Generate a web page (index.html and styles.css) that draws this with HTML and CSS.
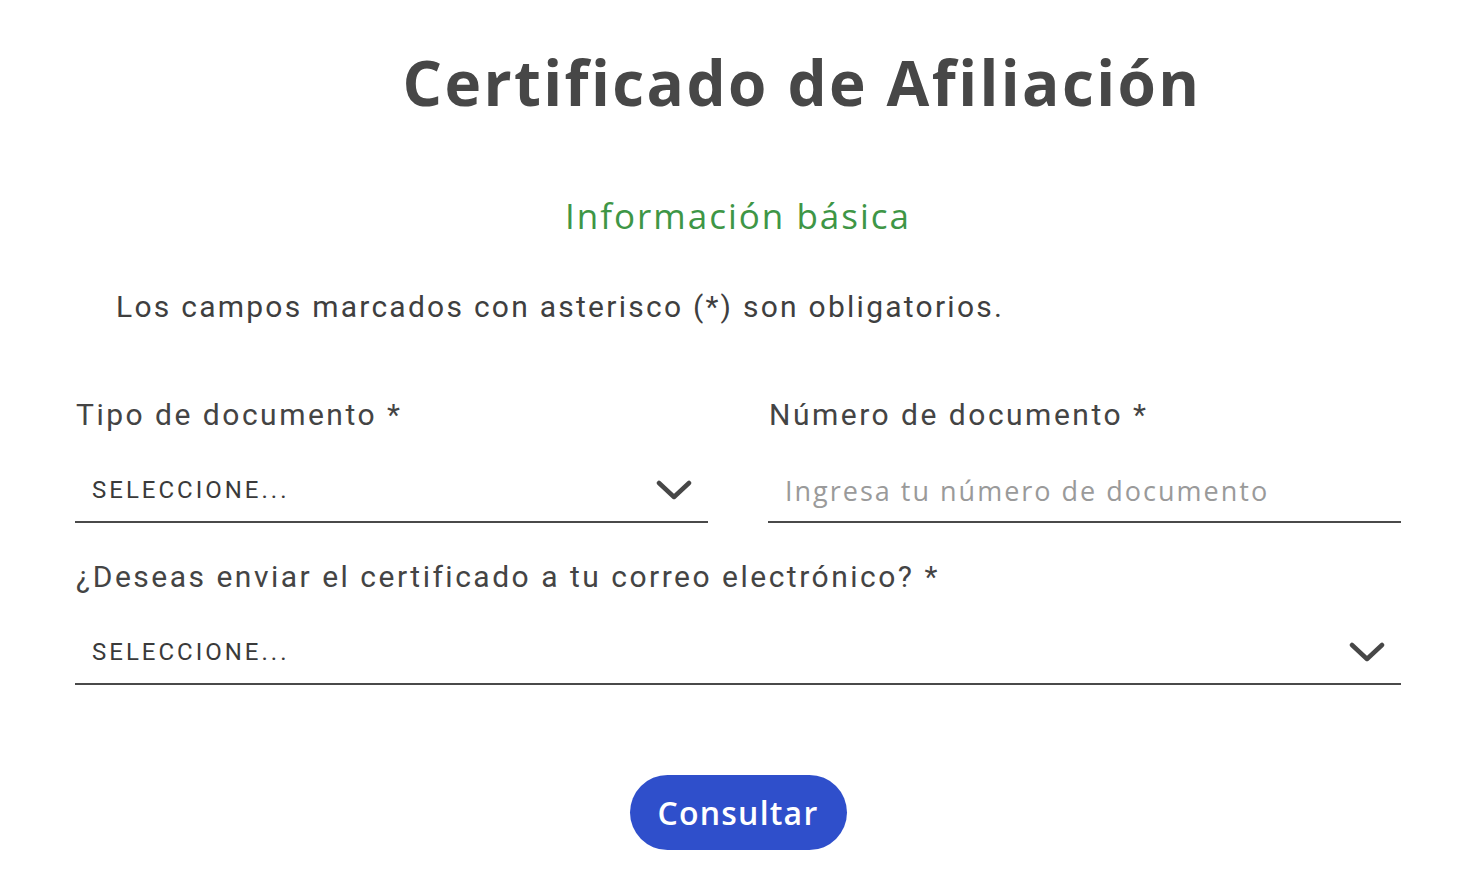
FILE: index.html
```html
<!DOCTYPE html>
<html lang="es">
<head>
<meta charset="utf-8">
<title>Certificado de Afiliación</title>
<link rel="stylesheet" href="styles.css">
</head>
<body>
<main class="page">
  <h1 class="title">Certificado de Afiliación</h1>
  <h2 class="subtitle">Información básica</h2>
  <p class="note">Los campos marcados con asterisco (*) son obligatorios.</p>
  <form class="form">
    <div class="row two">
      <div class="field">
        <label class="label">Tipo de documento *</label>
        <div class="select">
          <span class="select-text">SELECCIONE...</span>
          <svg class="chevron" viewBox="0 0 36 20" width="36" height="20"><path d="M3 3 L18 17 L33 3" fill="none" stroke="#474747" stroke-width="4.5" stroke-linecap="round" stroke-linejoin="round"/></svg>
        </div>
      </div>
      <div class="field">
        <label class="label">Número de documento *</label>
        <div class="input">
          <span class="placeholder">Ingresa tu número de documento</span>
        </div>
      </div>
    </div>
    <div class="row">
      <div class="field">
        <label class="label">¿Deseas enviar el certificado a tu correo electrónico? *</label>
        <div class="select">
          <span class="select-text">SELECCIONE...</span>
          <svg class="chevron" viewBox="0 0 36 20" width="36" height="20"><path d="M3 3 L18 17 L33 3" fill="none" stroke="#474747" stroke-width="4.5" stroke-linecap="round" stroke-linejoin="round"/></svg>
        </div>
      </div>
    </div>
    <div class="actions">
      <button type="button" class="btn">Consultar</button>
    </div>
  </form>
</main>
</body>
</html>
```

FILE: styles.css
```css
* { box-sizing: border-box; }
html, body { margin: 0; padding: 0; background: #fff; }
body { font-family: "Open Sans", "Liberation Sans", sans-serif; color: #474747; }
.page { width: 1326px; margin: 0 0 0 75px; }
.title {
  margin: 0;
  padding: 42px 0 0 128px;
  text-align: center;
  font-family: "Open Sans", sans-serif;
  font-weight: 700;
  font-size: 62px;
  line-height: 80px;
  color: #474747;
  letter-spacing: 2.4px;
}
.subtitle {
  margin: 0;
  padding-top: 72px;
  text-align: center;
  font-family: "Open Sans", sans-serif;
  font-weight: 400;
  font-size: 35px;
  line-height: 44px;
  color: #3e9646;
  letter-spacing: 2px;
}
.note {
  margin: 0;
  padding: 51px 0 0 41px;
  font-family: "Roboto", sans-serif;
  font-size: 30px;
  line-height: 36px;
  color: #3f3f3f;
  letter-spacing: 2.25px;
}
.form { display: flex; flex-direction: column; padding-top: 72px; }
.row { display: flex; gap: 60px; }
.row + .row { margin-top: 36px; }
.field { flex: 1; display: flex; flex-direction: column; }
.label {
  font-family: "Roboto", sans-serif;
  font-size: 30px;
  line-height: 36px;
  color: #444;
  letter-spacing: 2.5px;
  padding-left: 1px;
}
.select, .input {
  display: flex;
  align-items: center;
  justify-content: space-between;
  height: 70px;
  margin-top: 20px;
  padding: 6px 16px 0 17px;
  border-bottom: 2px solid #4a4a4a;
}
.select-text {
  font-family: "Roboto", sans-serif;
  font-size: 24px;
  color: #3a3a3a;
  letter-spacing: 3px;
}
.placeholder {
  font-family: "Open Sans", sans-serif;
  font-size: 27px;
  color: #9a9a9a;
  letter-spacing: 2px;
}
.chevron { display: block; }
.actions { display: flex; justify-content: center; padding-top: 90px; }
.btn {
  width: 217px;
  height: 75px;
  border: none;
  border-radius: 38px;
  background: #2f4fcb;
  color: #fff;
  font-family: "Open Sans", sans-serif;
  font-weight: 600;
  font-size: 32px;
  letter-spacing: 1.2px;
  cursor: pointer;
}
```
